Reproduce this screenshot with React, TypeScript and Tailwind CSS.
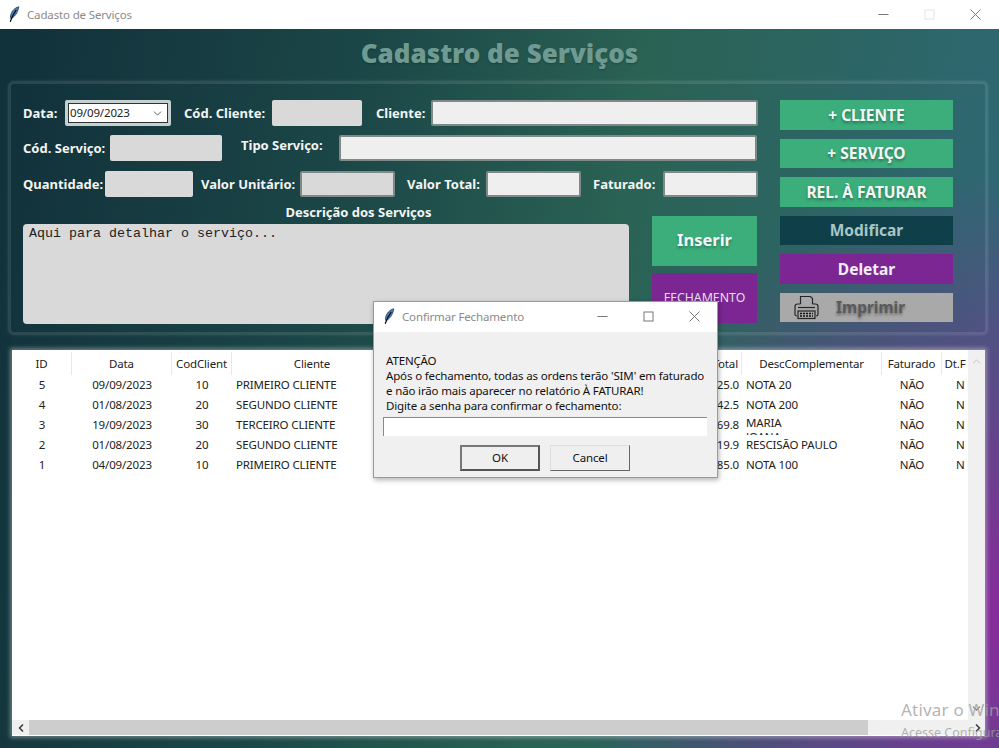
import React from 'react';
import { ChevronDown, ChevronLeft, ChevronRight, ChevronUp } from 'lucide-react';

const rows = [
  { id: 5, data: '09/09/2023', cod: 10, cliente: 'PRIMEIRO CLIENTE', total: '125.0', desc: 'NOTA 20' },
  { id: 4, data: '01/08/2023', cod: 20, cliente: 'SEGUNDO CLIENTE', total: '142.5', desc: 'NOTA 200' },
  { id: 3, data: '19/09/2023', cod: 30, cliente: 'TERCEIRO CLIENTE', total: '169.8', desc: 'MARIA JOANA' },
  { id: 2, data: '01/08/2023', cod: 20, cliente: 'SEGUNDO CLIENTE', total: '119.9', desc: 'RESCISÃO PAULO' },
  { id: 1, data: '04/09/2023', cod: 10, cliente: 'PRIMEIRO CLIENTE', total: '185.0', desc: 'NOTA 100' },
];

const Feather = () => (
  <svg width="12" height="17" viewBox="0 0 12 17" className="shrink-0">
    <path d="M10.8 0.8C7 1.6 3.5 5 2.6 9.6c-.2 1.2-.1 2.2.2 3C6.2 11.6 9.8 6.8 10.8.8z" fill="#4a7fb5" stroke="#1d3a5c" strokeWidth="0.8" />
    <path d="M8.2 4C6 7 4 10.5 2.2 15.8" fill="none" stroke="#000" strokeWidth="1.2" />
  </svg>
);

const WindowButtons = ({ gap, muted }: { gap: string; muted?: boolean }) => (
  <div className={`flex items-center ${gap}`}>
    <svg width="11" height="11" viewBox="0 0 11 11"><path d="M0.5 5.5h10" stroke="#777" /></svg>
    <svg width="11" height="11" viewBox="0 0 11 11"><rect x="1" y="1" width="9" height="9" fill="none" stroke={muted ? '#e3e3e3' : '#777'} /></svg>
    <svg width="11" height="11" viewBox="0 0 11 11"><path d="M0.5 0.5l10 10M10.5 0.5l-10 10" stroke="#777" /></svg>
  </div>
);

const Printer = () => (
  <svg width="25" height="25" viewBox="0 0 25 25" fill="none" stroke="#262626" strokeWidth="1.2">
    <path d="M6.5 9V1.5h10l2 2V9" />
    <path d="M6.5 9H3.5Q1 9 1 11.5v8q0 1.5 2 1.5M18.5 9h3q2.5 0 2.5 2.5v8q0 1.5-2 1.5" />
    <path d="M4 12.5h17" />
    <rect x="4" y="16" width="17" height="7.5" />
    <path d="M6 18.5h13M6 21h13" stroke="#111" strokeWidth="1.5" strokeDasharray="2 1" />
  </svg>
);

const Label = ({ w, children }: { w: string; children: React.ReactNode }) => (
  <span className={`${w} shrink-0 pt-[2px] text-[13px] font-bold text-[#f2f5f4] whitespace-nowrap`}>{children}</span>
);

export default function App() {
  return (
    <div className="relative w-[999px] h-[748px] overflow-hidden flex flex-col font-['Noto_Sans',sans-serif]">
      {/* Title bar */}
      <div className="h-[29px] shrink-0 bg-white flex items-center pl-[8px] pr-[18px]">
        <Feather />
        <span className="ml-[7px] text-[11.5px] tracking-[-0.15px] text-[#8a8a8a]">Cadasto de Serviços</span>
        <div className="ml-auto">
          <WindowButtons gap="gap-[35px]" muted />
        </div>
      </div>

      <div className="flex-1 flex flex-col bg-[radial-gradient(circle_at_102%_82%,#8a2a9c_0%,rgba(138,42,156,0)_38%),linear-gradient(100deg,#11303a_0%,#1b4647_32%,#2a6254_58%,#30697a_100%)]">
        <h1 className="h-[52px] shrink-0 pb-[3px] flex items-center justify-center text-[26px] font-black text-[#6f9a92] [text-shadow:0_1px_2px_rgba(0,0,0,0.25)]">
          Cadastro de Serviços
        </h1>

        {/* Form panel */}
        <div className="ml-[8px] w-[980px] h-[254px] shrink-0 rounded-[6px] border-[3px] border-white/10 shadow-[0_0_3px_rgba(255,255,255,0.12)] pl-[12px] pt-[16px] flex">
          <div className="w-[735px] shrink-0">
            <div className="flex items-center h-[26px]">
              <Label w="w-[42px]">Data:</Label>
              <div className="w-[106px] h-[26px] rounded-[2px] border-[3px] border-[#c5d0d0] shadow-[inset_0_0_0_1px_#333] bg-white flex items-center justify-between pl-[2px] pr-[4px]">
                <span className="text-[11.5px] tracking-[-0.15px] text-[#222]">09/09/2023</span>
                <ChevronDown size={13} strokeWidth={1.4} className="text-[#333]" />
              </div>
              <div className="w-[13px]" />
              <Label w="w-[88px]">Cód. Cliente:</Label>
              <div className="w-[90px] h-[26px] rounded-[2px] bg-[#d9d9d9]" />
              <div className="w-[14px]" />
              <Label w="w-[55px]">Cliente:</Label>
              <div className="w-[327px] h-[26px] rounded-[2px] border-[2px] border-[#7f8a88] bg-[#efefef]" />
            </div>

            <div className="flex items-center h-[26px] mt-[9px]">
              <Label w="w-[87px]">Cód. Serviço:</Label>
              <div className="w-[112px] h-[26px] rounded-[2px] bg-[#d9d9d9]" />
              <div className="w-[19px]" />
              <Label w="w-[98px] -mt-[7px]">Tipo Serviço:</Label>
              <div className="w-[418px] h-[26px] rounded-[2px] border-[2px] border-[#7f8a88] bg-[#efefef]" />
            </div>

            <div className="flex items-center h-[26px] mt-[10px]">
              <Label w="w-[82px]">Quantidade:</Label>
              <div className="w-[88px] h-[26px] rounded-[2px] bg-[#d9d9d9]" />
              <div className="w-[8px]" />
              <Label w="w-[99px]">Valor Unitário:</Label>
              <div className="w-[95px] h-[26px] rounded-[2px] border-[2px] border-[#7f8a88] bg-[#d9d9d9]" />
              <div className="w-[12px]" />
              <Label w="w-[79px]">Valor Total:</Label>
              <div className="w-[95px] h-[26px] rounded-[2px] border-[2px] border-[#7f8a88] bg-[#efefef]" />
              <div className="w-[12px]" />
              <Label w="w-[70px]">Faturado:</Label>
              <div className="w-[95px] h-[26px] rounded-[2px] border-[2px] border-[#7f8a88] bg-[#efefef]" />
            </div>

            <div className="flex mt-[7px]">
              <div className="w-[606px]">
                <div className="pl-[65px] h-[16px] flex items-center justify-center">
                  <Label w="">Descrição dos Serviços</Label>
                </div>
                <div className="mt-[4px] h-[100px] rounded-[4px] bg-[#d9d9d9] pl-[6px] pt-[2px] font-['Liberation_Mono',monospace] text-[13.33px] leading-[16px] text-[#222]">
                  Aqui para detalhar o serviço...
                </div>
              </div>
              <div className="ml-[23px] w-[105px] pt-[12px] flex flex-col gap-[7px]">
                <div className="h-[50px] pb-[1px] bg-[#3cae7c] flex items-center justify-center text-[16.5px] font-bold text-[#f4f7f6] [text-shadow:0_2px_3px_rgba(0,0,0,0.3)]">
                  Inserir
                </div>
                <div className="h-[50px] bg-[#7b2692] flex items-center justify-center text-[12.3px] text-[#e9dff0]">
                  FECHAMENTO
                </div>
              </div>
            </div>
          </div>

          {/* Right buttons */}
          <div className="ml-[22px] w-[173px] h-[222px] grid grid-rows-6 gap-[9px] text-[15.5px] font-bold">
            <div className="bg-[#3cae7c] flex items-center justify-center pt-[1px] text-[#f4f7f6] [text-shadow:0_2px_3px_rgba(0,0,0,0.35)]">+ CLIENTE</div>
            <div className="bg-[#3cae7c] flex items-center justify-center pt-[1px] text-[#f4f7f6] [text-shadow:0_2px_3px_rgba(0,0,0,0.35)]">+ SERVIÇO</div>
            <div className="bg-[#3cae7c] flex items-center justify-center pt-[1px] text-[#f4f7f6] [text-shadow:0_2px_3px_rgba(0,0,0,0.35)]">REL. À FATURAR</div>
            <div className="bg-[#0f3f48] flex items-center justify-center text-[#a9c6c6]">Modificar</div>
            <div className="bg-[#7b2692] flex items-center justify-center pt-[1px] text-[#f4eef7]">Deletar</div>
            <div className="bg-[#a9a9a9] flex items-center pl-[14px] text-[#5a5a5a] [text-shadow:0_2px_3px_rgba(0,0,0,0.4)]">
              <Printer />
              <span className="ml-[17px]">Imprimir</span>
            </div>
          </div>
        </div>

        {/* Table */}
        <div className="ml-[12px] mt-[15px] w-[973px] h-[386px] shrink-0 flex flex-col bg-white shadow-[0_0_4px_2px_rgba(255,255,255,0.35)] text-[11.5px] tracking-[-0.15px] text-[#222]">
          <div className="flex-1 flex min-h-0">
            <div className="w-[956px] pt-[2px]">
              <div className="grid grid-cols-[60px_100px_60px_160px_289px_61px_140px_60px_26px] h-[23px] items-center text-center">
                <div className="border-r border-[#e8e8e8] h-full flex items-center justify-center">ID</div>
                <div className="border-r border-[#e8e8e8] h-full flex items-center justify-center">Data</div>
                <div className="border-r border-[#e8e8e8] h-full flex items-center justify-center">CodClient</div>
                <div className="h-full flex items-center justify-center">Cliente</div>
                <div />
                <div className="border-r border-[#e8e8e8] h-full flex items-center justify-end pr-[3px]">Total</div>
                <div className="border-r border-[#e8e8e8] h-full flex items-center justify-center">DescComplementar</div>
                <div className="border-r border-[#e8e8e8] h-full flex items-center justify-center">Faturado</div>
                <div className="h-full flex items-center justify-center overflow-hidden whitespace-nowrap">Dt.F</div>
              </div>
              {rows.map((r) => (
                <div key={r.id} className="grid grid-cols-[60px_100px_60px_160px_289px_61px_140px_60px_26px] h-[20px] items-center text-center">
                  <div>{r.id}</div>
                  <div>{r.data}</div>
                  <div>{r.cod}</div>
                  <div className="text-left pl-[4px]">{r.cliente}</div>
                  <div />
                  <div className="text-right pr-[3px]">{r.total}</div>
                  <div className="text-left pl-[4px] h-[20px] overflow-hidden">
                    {r.desc === 'MARIA JOANA' ? (
                      <div className="leading-[14px] pt-[1px]">MARIA<br />JOANA</div>
                    ) : (
                      <div className="leading-[20px]">{r.desc}</div>
                    )}
                  </div>
                  <div>NÃO</div>
                  <div className="overflow-hidden text-left pl-[14px]">N</div>
                </div>
              ))}
            </div>
            <div className="w-[17px] bg-[#f0f0f0] flex flex-col items-center justify-between py-[5px] text-[#bbb]">
              <ChevronUp size={13} strokeWidth={1.5} />
              <ChevronDown size={13} strokeWidth={2} className="text-[#777]" />
            </div>
          </div>
          <div className="h-[15px] shrink-0 mb-[1px] flex bg-[#f0f0f0]">
            <div className="w-[17px] flex items-center justify-center text-[#444]">
              <ChevronLeft size={12} strokeWidth={3.5} />
            </div>
            <div className="w-[839px] bg-[#cdcdcd]" />
            <div className="flex-1 flex items-center justify-end pr-[1px] text-[#444]">
              <ChevronRight size={12} strokeWidth={3.5} />
            </div>
          </div>
        </div>
      </div>

      {/* Confirm dialog */}
      <div className="absolute left-[373px] top-[301px] w-[345px] h-[177px] bg-[#f0f0f0] border border-[#9a9a9a] shadow-[1px_2px_5px_rgba(0,0,0,0.3)] flex flex-col">
        <div className="h-[30px] shrink-0 pb-[1px] bg-white flex items-center pl-[9px] pr-[17px]">
          <Feather />
          <span className="ml-[7px] text-[11.5px] tracking-[-0.15px] text-[#8a8a8a]">Confirmar Fechamento</span>
          <div className="ml-auto">
            <WindowButtons gap="gap-[35px]" />
          </div>
        </div>
        <div className="pt-[21px] pl-[12px] text-[11.5px] tracking-[-0.15px] leading-[15px] text-[#111] whitespace-nowrap">
          <p>ATENÇÃO</p>
          <p>Após o fechamento, todas as ordens terão 'SIM' em faturado</p>
          <p>e não irão mais aparecer no relatório À FATURAR!</p>
          <p>Digite a senha para confirmar o fechamento:</p>
        </div>
        <div className="ml-[9px] mt-[4px] w-[324px] h-[19px] bg-white border-l border-t border-[#8a8a8a]" />
        <div className="ml-[86px] mt-[9px] flex gap-[10px] text-[11.5px] tracking-[-0.15px] text-[#111]">
          <div className="w-[80px] h-[26px] bg-[#efefef] border-2 border-t-[#777] border-l-[#777] border-r-[#555] border-b-[#555] flex items-center justify-center">OK</div>
          <div className="w-[80px] h-[26px] bg-[#efefef] border border-t-[#ddd] border-l-[#ddd] border-r-[#666] border-b-[#666] flex items-center justify-center">Cancel</div>
        </div>
      </div>

      {/* Windows watermark */}
      <div className="absolute left-[901px] top-[698px] w-[98px] overflow-hidden whitespace-nowrap text-[#9f9f9f]/80 pointer-events-none">
        <div className="text-[17px] tracking-[0.2px] leading-[24px]">Ativar o Windows</div>
        <div className="text-[12.5px] leading-[22px]">Acesse Configurações</div>
      </div>
    </div>
  );
}
